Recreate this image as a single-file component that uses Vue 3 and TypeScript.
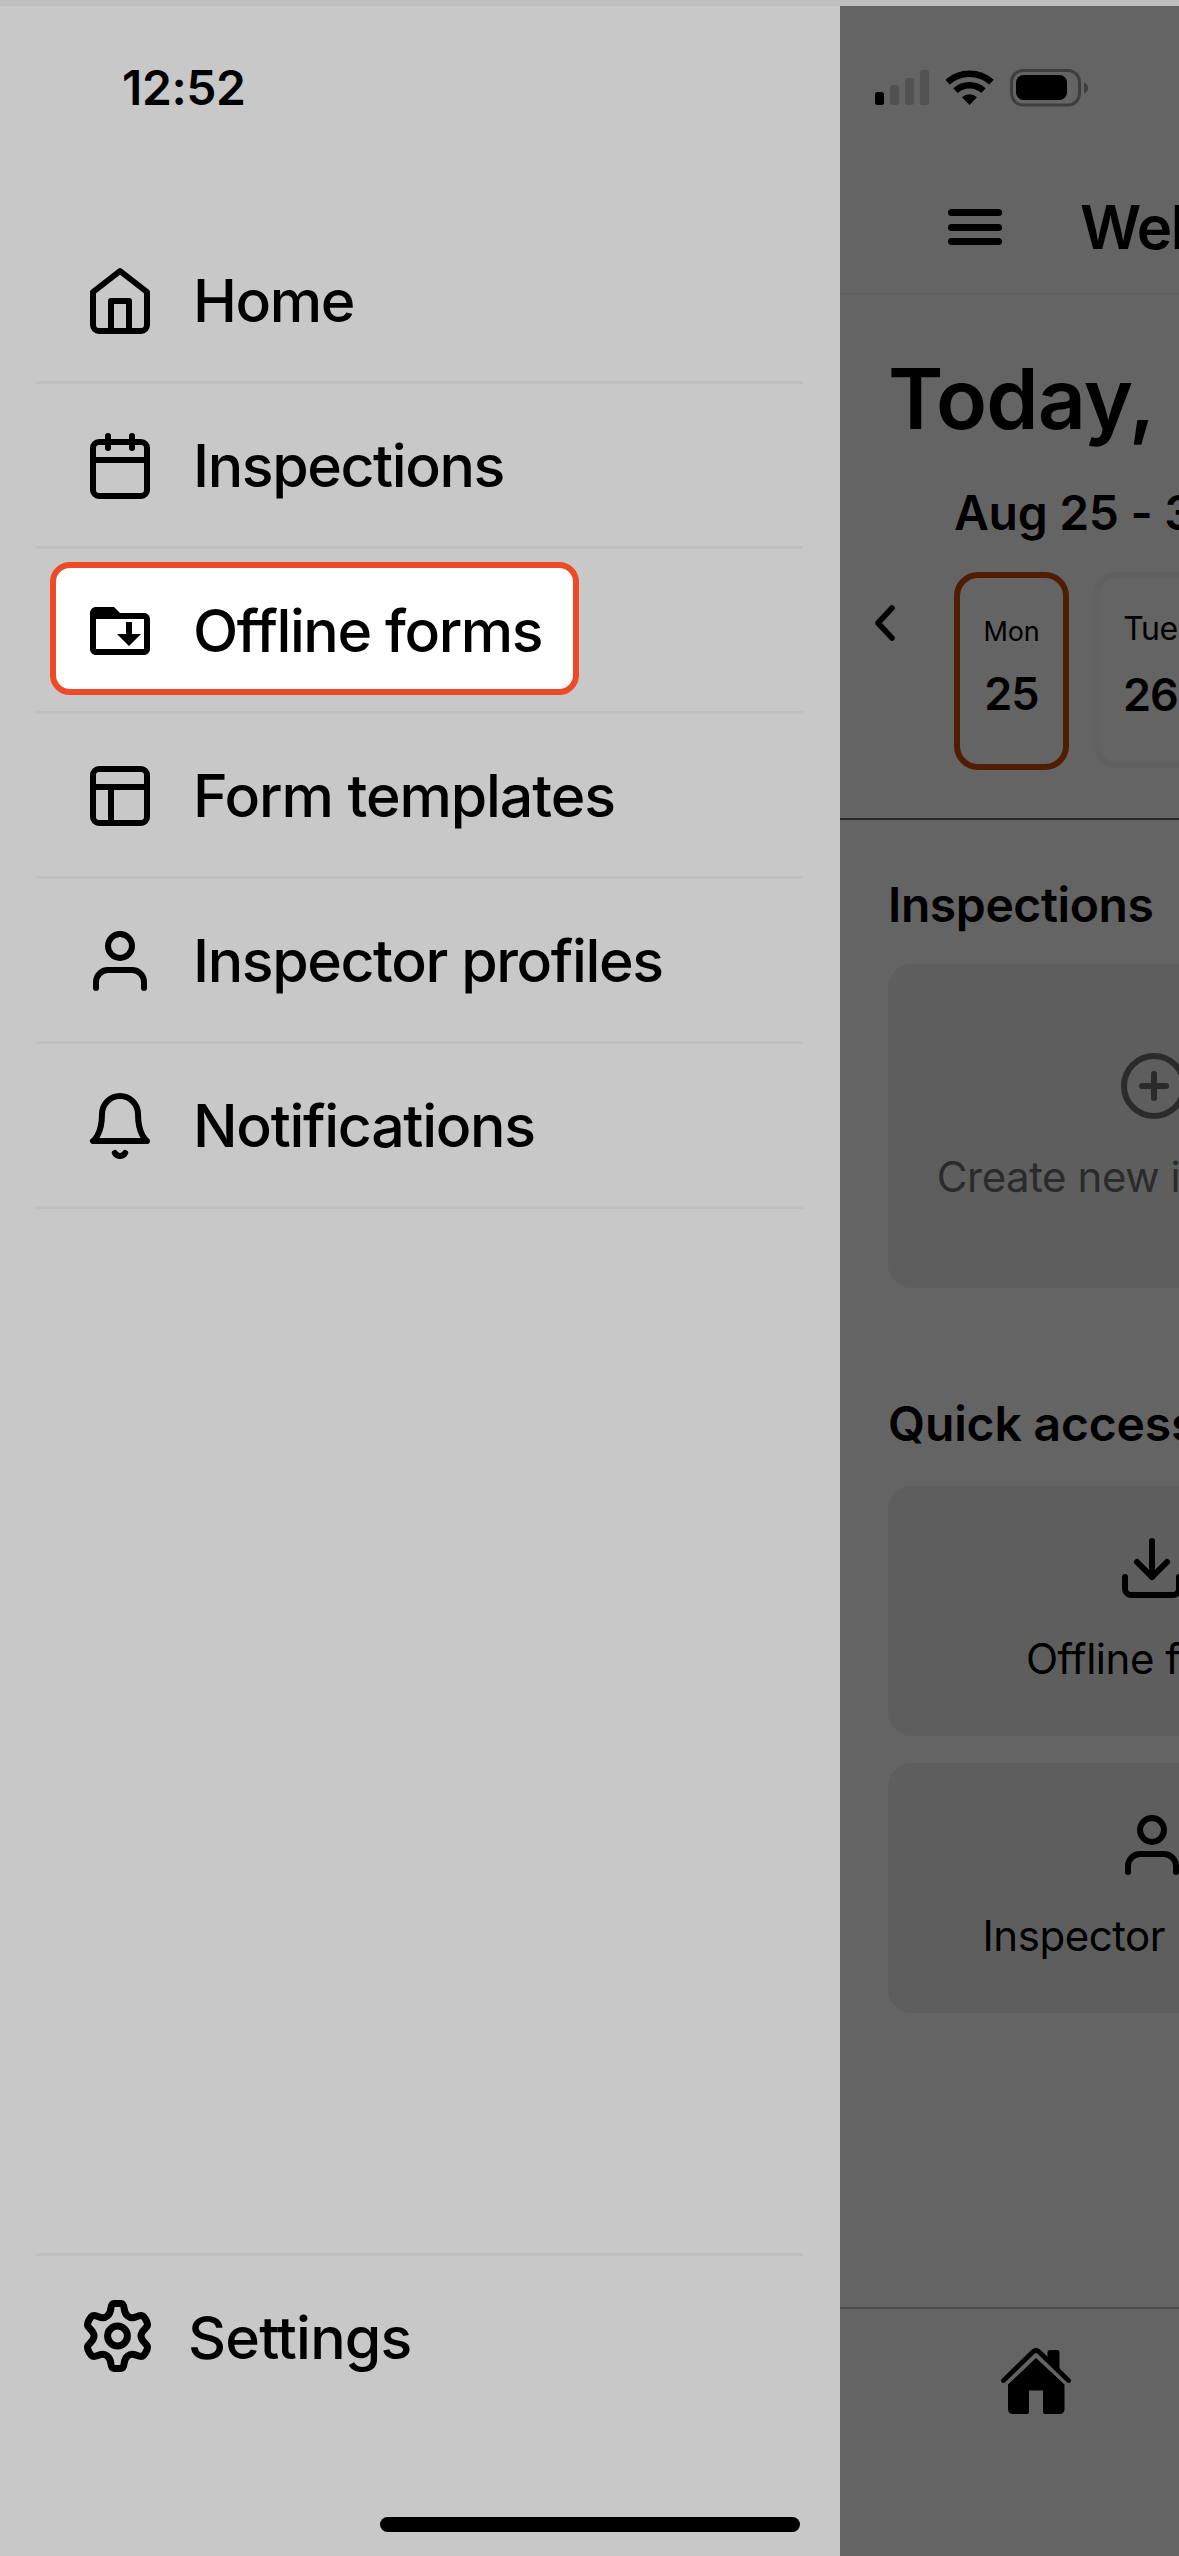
<script setup lang="ts">
interface MenuItem {
  label: string
  paths: string[]
  filled?: boolean
  highlighted?: boolean
  spacing: number
}

const USER = ['M20 21v-2a4 4 0 0 0-4-4H8a4 4 0 0 0-4 4v2', 'M12 3a4 4 0 1 1 0 8a4 4 0 1 1 0-8z']

const menu: MenuItem[] = [
  {
    label: 'Home',
    paths: ['M3 9l9-7 9 7v11a2 2 0 0 1-2 2H5a2 2 0 0 1-2-2z', 'M9 22V12h6v10'],
    spacing: -1.4,
  },
  {
    label: 'Inspections',
    paths: ['M5 4h14a2 2 0 0 1 2 2v14a2 2 0 0 1-2 2H5a2 2 0 0 1-2-2V6a2 2 0 0 1 2-2z', 'M16 2v4', 'M8 2v4', 'M3 10h18'],
    spacing: -1.4,
  },
  {
    label: 'Offline forms',
    paths: [
      'M20 6h-8l-2-2H4c-1.1 0-2 .9-2 2v12c0 1.1.9 2 2 2h16c1.1 0 2-.9 2-2V8c0-1.1-.9-2-2-2zM20 18H4V8h16z',
      'M16 9h-2v4h-3l4 4 4-4h-3z',
    ],
    filled: true,
    highlighted: true,
    spacing: -1.4,
  },
  {
    label: 'Form templates',
    paths: ['M5 3h14a2 2 0 0 1 2 2v14a2 2 0 0 1-2 2H5a2 2 0 0 1-2-2V5a2 2 0 0 1 2-2z', 'M3 9h18', 'M9 21V9'],
    spacing: -1.1,
  },
  { label: 'Inspector profiles', paths: USER, spacing: -1.4 },
  {
    label: 'Notifications',
    paths: ['M18 8A6 6 0 0 0 6 8c0 7-3 9-3 9h18s-3-2-3-9', 'M13.73 21a2 2 0 0 1-3.46 0'],
    spacing: -1.3,
  },
]

const quickAccess = [
  { label: 'Offline forms', paths: ['M21 15v4a2 2 0 0 1-2 2H5a2 2 0 0 1-2-2v-4', 'M7 10l5 5 5-5', 'M12 15V3'] },
  { label: 'Inspector profiles', paths: USER },
]
</script>

<template>
  <div class="screen">
    <div class="top-strip"></div>
    <div class="panes">
      <aside class="drawer">
        <div class="time">12:52</div>
        <nav class="menu">
          <div v-for="item in menu" :key="item.label" class="row">
            <div v-if="item.highlighted" class="highlight"></div>
            <svg class="icon" :class="{ filled: item.filled }" viewBox="0 0 24 24">
              <path v-for="d in item.paths" :key="d" :d="d" fill-rule="evenodd" />
            </svg>
            <span class="label" :style="{ letterSpacing: item.spacing + 'px' }">{{ item.label }}</span>
          </div>
        </nav>
        <div class="settings">
          <svg class="gear" viewBox="0 0 67 72">
            <path
              d="M30 3.5H37C39 3.5 39.8 5 40.2 9C41 15 45 18.5 50 17.5C54 16.5 57 14 59.5 16.5C62 19.5 63.5 23 63.5 25C63.5 28 57 30.5 57 36C57 41.5 63.5 44 63.5 47C63.5 49 62 52.5 59.5 55.5C57 58 54 55.5 50 54.5C45 53.5 41 57 40.2 63C39.8 67 39 68.5 37 68.5H30C28 68.5 27.2 67 26.8 63C26 57 22 53.5 17 54.5C13 55.5 10 58 7.5 55.5C5 52.5 3.5 49 3.5 47C3.5 44 10 41.500 10 36C10 30.5 3.5 28 3.5 25C3.5 23 5 19.5 7.5 16.5C10 14 13 16.5 17 17.5C22 18.5 26 15 26.8 9C27.2 5 28 3.5 30 3.5Z"
            />
            <circle cx="33.5" cy="36" r="9.9" />
          </svg>
          <span class="label">Settings</span>
        </div>
        <div class="home-indicator"></div>
      </aside>

      <main class="page">
        <div class="status">
          <svg width="54" height="36" viewBox="0 0 54 36">
            <rect x="0" y="22" width="9" height="13" rx="2.5" fill="#000" />
            <rect x="15" y="15" width="9" height="20" rx="2.5" fill="#525252" />
            <rect x="30" y="8" width="9" height="27" rx="2.5" fill="#525252" />
            <rect x="45" y="0" width="9" height="35" rx="2.5" fill="#525252" />
          </svg>
          <svg class="wifi" width="48" height="36" viewBox="0 0 48 36">
            <path d="M1.5 12.2A32.5 32 0 0 1 45.5 12.2" fill="none" stroke="#000" stroke-width="6.5" />
            <path d="M9.5 20.7A20.5 20 0 0 1 37.5 20.7" fill="none" stroke="#000" stroke-width="6.5" />
            <path d="M23.5 35L16 27.3A11 11 0 0 1 31 27.3Z" fill="#000" />
          </svg>
          <svg width="79" height="38" viewBox="0 0 79 38">
            <rect x="1.5" y="1.5" width="68" height="34.5" rx="11.5" fill="none" stroke="#3e3e3e" stroke-width="3" />
            <rect x="6" y="6" width="51" height="25" rx="7.5" fill="#000" />
            <path d="M74 13.500c5.500 2.500 5.500 8.500 0 11z" fill="#3e3e3e" />
          </svg>
        </div>

        <header class="header">
          <div class="burger"><i></i><i></i><i></i></div>
          <span class="title">Welcome</span>
        </header>

        <h1 class="today">Today,</h1>
        <div class="range">Aug 25 - 31</div>

        <div class="days">
          <svg class="chevron" width="22" height="36" viewBox="0 0 22 36">
            <path d="M17 3L3 18L17 33" />
          </svg>
          <div class="day active">
            <span class="dow small">Mon</span>
            <span class="num">25</span>
          </div>
          <div class="day">
            <span class="dow">Tue</span>
            <span class="num">26</span>
          </div>
        </div>
        <div class="divider"></div>

        <h2 class="section">Inspections</h2>
        <div class="card create">
          <svg class="icon" viewBox="0 0 24 24">
            <circle cx="12" cy="12" r="10" />
            <path d="M12 8v8M8 12h8" />
          </svg>
          <span class="caption">Create new inspection</span>
        </div>

        <h2 class="section quick">Quick access</h2>
        <div class="cards">
          <div v-for="q in quickAccess" :key="q.label" class="card tile">
            <svg class="icon" viewBox="0 0 24 24">
              <path v-for="d in q.paths" :key="d" :d="d" />
            </svg>
            <span class="caption">{{ q.label }}</span>
          </div>
        </div>

        <footer class="tabbar">
          <svg width="70" height="66" viewBox="0 0 70 66">
            <path
              d="M2.5 32.5L32 3.800Q35 1 38 3.800L67.500 32.500"
              fill="none"
              stroke="#000"
              stroke-width="4.8"
              stroke-linecap="round"
            />
            <path d="M46.500 13V4.500Q46.500 2 49 2H56Q58.500 2 58.500 4.500V25Z" fill="#000" />
            <path
              d="M35 10L63.500 36.500V61Q63.500 66 58.500 66H44Q42 66 42 64V42.500H28V64Q28 66 26 66H12Q7 66 7 61V36.500Z"
              fill="#000"
            />
          </svg>
        </footer>
      </main>
    </div>
  </div>
</template>

<style>
body {
  margin: 0;
  overflow: hidden;
}
</style>

<style scoped>
.screen {
  width: 1179px;
  height: 2556px;
  display: flex;
  flex-direction: column;
  overflow: hidden;
  font-family: Inter, 'Liberation Sans', sans-serif;
  color: #000;
  white-space: nowrap;
}
.top-strip {
  height: 6px;
  background: #bfbfbf;
}
.panes {
  flex: 1;
  display: flex;
  min-height: 0;
}
.drawer {
  width: 840px;
  flex: none;
  box-sizing: border-box;
  background: #c8c8c8;
  display: flex;
  flex-direction: column;
}
.time {
  height: 213px;
  box-sizing: border-box;
  padding: 51px 0 0 122px;
  font-size: 48px;
  line-height: 61px;
  font-weight: 600;
  letter-spacing: -0.4px;
}
.menu {
  margin: 0 37px 0 36px;
}
.row {
  position: relative;
  height: 165px;
  box-sizing: border-box;
  border-bottom: 3px solid #bfbfbf;
  padding: 2px 0 0 48px;
  display: flex;
  align-items: center;
}
.highlight {
  position: absolute;
  left: 14px;
  top: 13px;
  width: 529px;
  height: 133px;
  box-sizing: border-box;
  border: 6px solid #ef4a28;
  border-radius: 20px;
  background: #fff;
}
.icon {
  position: relative;
  width: 72px;
  height: 72px;
  flex: none;
  fill: none;
  stroke: currentColor;
  stroke-width: 2;
  stroke-linecap: round;
  stroke-linejoin: round;
}
.icon.filled {
  fill: #000;
  stroke: none;
}
.label {
  position: relative;
  font-size: 59px;
  line-height: 72px;
  font-weight: 500;
}
.row .label {
  margin-left: 37px;
}
.settings {
  margin: auto 37px 0 36px;
  height: 264px;
  box-sizing: border-box;
  border-top: 3px solid #bfbfbf;
  padding: 44px 0 0 48px;
  display: flex;
  align-items: flex-start;
}
.gear {
  width: 67px;
  height: 72px;
  fill: none;
  stroke: #000;
  stroke-width: 7;
  stroke-linejoin: round;
}
.settings .label {
  margin: 2px 0 0 37px;
  letter-spacing: -0.8px;
}
.home-indicator {
  width: 420px;
  height: 15px;
  margin: 0 0 24px 380px;
  border-radius: 8px;
  background: #000;
}

.page {
  flex: 1;
  min-width: 0;
  overflow: hidden;
  background: #646464;
  display: flex;
  flex-direction: column;
}
.page > * {
  flex: none;
}
.status {
  height: 163px;
  padding-left: 35px;
  display: flex;
  align-items: center;
}
.wifi {
  margin: 0 16px 0 17px;
}
.header {
  height: 126px;
  box-sizing: border-box;
  padding: 0 0 8px 108px;
  border-bottom: 2px solid #606060;
  display: flex;
  align-items: center;
}
.burger {
  width: 54px;
  flex: none;
  display: flex;
  flex-direction: column;
  gap: 7.5px;
}
.burger i {
  height: 7px;
  border-radius: 3.5px;
  background: #000;
}
.title {
  margin-left: 78px;
  font-size: 60px;
  line-height: 72px;
  font-weight: 600;
  letter-spacing: -1.5px;
}
.today {
  margin: 62px 0 0 48px;
  font-size: 84px;
  line-height: 83px;
  font-weight: 600;
  letter-spacing: -0.9px;
}
.range {
  margin: 42px 0 0 114px;
  font-size: 48px;
  line-height: 61px;
  font-weight: 600;
  letter-spacing: -0.3px;
}
.days {
  margin-top: 29px;
  padding-left: 35px;
  height: 198px;
  display: flex;
}
.chevron {
  flex: none;
  margin: 33px 57px 0 0;
  fill: none;
  stroke: #000;
  stroke-width: 5.5;
  stroke-linecap: round;
  stroke-linejoin: round;
}
.day {
  width: 115px;
  height: 196px;
  flex: none;
  box-sizing: border-box;
  border: 6px solid #606060;
  border-radius: 24px;
  display: flex;
  flex-direction: column;
  align-items: center;
  margin-right: 24px;
  padding-top: 31px;
}
.day.active {
  height: 198px;
  border-color: #501c02;
}
.dow {
  font-size: 32px;
  line-height: 40px;
  letter-spacing: -0.4px;
}
.dow.small {
  font-size: 27px;
  line-height: 46px;
  letter-spacing: -0.2px;
}
.num {
  margin-top: 19px;
  font-size: 45px;
  line-height: 54px;
  font-weight: 600;
  letter-spacing: -0.8px;
}
.active .num {
  margin-top: 12px;
}
.divider {
  margin-top: 48px;
  height: 2px;
  background: #282828;
}
.section {
  margin: 54px 0 0 48px;
  font-size: 48px;
  line-height: 61px;
  font-weight: 600;
  letter-spacing: -0.4px;
}
.section.quick {
  margin-top: 105px;
  letter-spacing: -0.15px;
}
.card {
  margin-left: 48px;
  box-sizing: border-box;
  border-radius: 24px;
  background: #5e5e5e;
  display: flex;
  flex-direction: column;
  align-items: center;
}
.caption {
  font-size: 42px;
  line-height: 50px;
  letter-spacing: -0.45px;
}
.create {
  width: 532px;
  height: 324px;
  margin-top: 29px;
  padding-top: 86px;
  color: #2b2b2b;
}
.create .caption {
  margin-top: 30px;
}
.cards {
  margin-top: 32px;
  display: flex;
  flex-direction: column;
  gap: 27px;
}
.tile {
  width: 528px;
  height: 250px;
  padding-top: 46px;
}
.tile .caption {
  margin-top: 30px;
}
.tabbar {
  height: 249px;
  box-sizing: border-box;
  margin-top: auto;
  border-top: 2px solid #4c4c4c;
  padding: 39px 0 0 161px;
}
</style>
